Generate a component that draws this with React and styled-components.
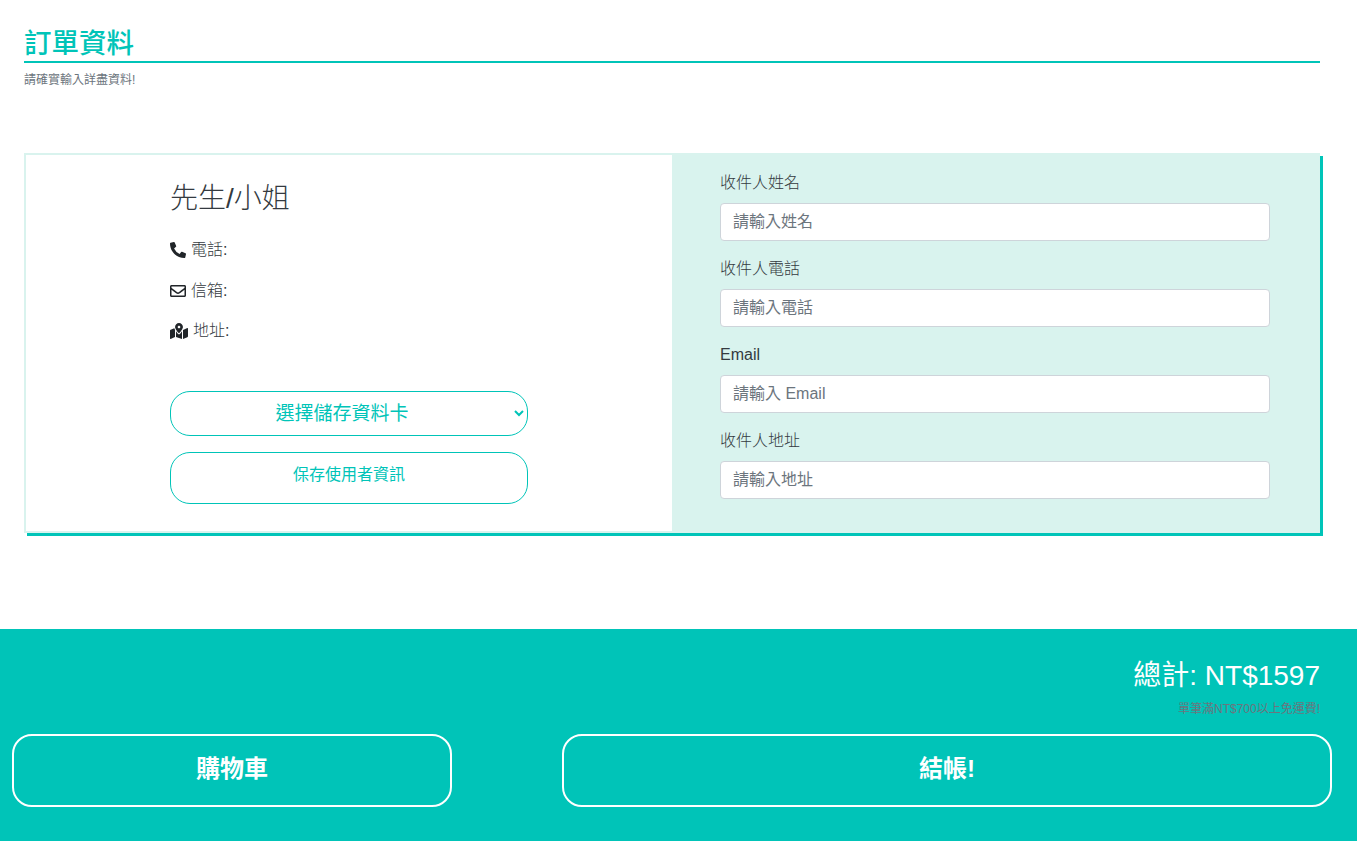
import React from 'react';
import styled, { createGlobalStyle } from 'styled-components';
import { FaPhoneAlt, FaRegEnvelope, FaMapMarkedAlt } from 'react-icons/fa';

const teal = '#00c4b8';
const mint = '#d9f3ee';
const textGrey = '#343a40';
const fontStack = '"Liberation Sans", "Noto Sans CJK TC", sans-serif';

const GlobalStyle = createGlobalStyle`
	html, body {
		margin: 0;
		padding: 0;
		background: #fff;
	}
	* {
		box-sizing: border-box;
	}
	body {
		font-family: ${fontStack};
		font-size: 16px;
		line-height: 1.5;
		color: #212529;
	}
`;

const Page = styled.div`
	min-height: 841px;
	display: flex;
	flex-direction: column;
`;

const Main = styled.main`
	height: 629px;
	padding: 24px 37px 0 24px;
`;

const Title = styled.h1`
	margin: 0;
	height: 39px;
	padding-top: 1px;
	font-size: 27.5px;
	font-weight: 500;
	line-height: 38px;
	color: ${teal};
	border-bottom: 2px solid ${teal};
`;

const Subtitle = styled.p`
	margin: 8px 0 0;
	font-size: 12px;
	line-height: 18px;
	color: #6c757d;
`;

const Card = styled.section`
	margin-top: 64px;
	height: 380px;
	display: grid;
	grid-template-columns: 1fr 1fr;
	border: 2px solid ${mint};
	box-shadow: 3px 3px 0 ${teal};
`;

const InfoColumn = styled.div`
	padding: 16px 144px 0;
	display: flex;
	flex-direction: column;
	background: #fff;
`;

const Name = styled.h3`
	margin: 8px 0 11px;
	font-size: 28px;
	font-weight: 300;
	line-height: 40px;
	color: ${textGrey};
`;

const InfoRow = styled.div`
	height: 40.5px;
	display: flex;
	align-items: center;
	gap: 5px;
	font-weight: 300;
	color: ${textGrey};

	svg {
		flex: none;
		color: #212529;
		font-size: ${(props) => props.$iconSize || 16}px;
	}
`;

const CardSelect = styled.select`
	margin-top: 39px;
	width: 100%;
	height: 45px;
	padding: 0 4px 0 2px;
	font-family: ${fontStack};
	font-size: 19px;
	color: ${teal};
	text-align: center;
	text-align-last: center;
	background: #fff;
	border: 1px solid ${teal};
	border-radius: 20px;
	outline: none;
`;

const SaveButton = styled.button`
	margin-top: 16px;
	width: 100%;
	height: 52px;
	padding: 0 0 10px;
	font-family: ${fontStack};
	font-size: 16px;
	color: ${teal};
	background: #fff;
	border: 1px solid ${teal};
	border-radius: 20px;
	cursor: pointer;
`;

const FormColumn = styled.form`
	padding: 16px 48px;
	background: ${mint};
`;

const Field = styled.div`
	margin-bottom: 16px;

	&:last-child {
		margin-bottom: 0;
	}
`;

const Label = styled.label`
	display: block;
	margin-bottom: 8px;
	line-height: 24px;
	color: ${textGrey};
	font-weight: 300;
`;

const Input = styled.input`
	display: block;
	width: 100%;
	height: 38px;
	padding: 6px 12px;
	font-family: ${fontStack};
	font-size: 16px;
	color: #212529;
	background: #fff;
	border: 1px solid #ced4da;
	border-radius: 4px;
	outline: none;

	&::placeholder {
		color: #6c757d;
		opacity: 1;
	}
`;

const Footer = styled.footer`
	height: 212px;
	padding: 27px 25px 34px 12px;
	display: flex;
	flex-direction: column;
	background: ${teal};
`;

const Total = styled.div`
	padding-right: 12px;
	text-align: right;
	font-size: 28px;
	line-height: 40px;
	color: #fff;
`;

const Note = styled.div`
	margin-top: 4px;
	padding-right: 12px;
	text-align: right;
	font-size: 12px;
	line-height: 18px;
	color: #6c757d;
`;

const Actions = styled.div`
	margin-top: auto;
	display: flex;
	justify-content: space-between;
`;

const ActionButton = styled.button`
	width: ${(props) => props.$width}px;
	height: 73px;
	padding: 0 0 8px;
	font-family: ${fontStack};
	font-size: 24px;
	font-weight: 700;
	color: #fff;
	background: transparent;
	border: 2px solid #fff;
	border-radius: 20px;
	cursor: pointer;
`;

const fields = [
	{ label: '收件人姓名', placeholder: '請輸入姓名' },
	{ label: '收件人電話', placeholder: '請輸入電話' },
	{ label: 'Email', placeholder: '請輸入 Email' },
	{ label: '收件人地址', placeholder: '請輸入地址' },
];

const App = () => {
	return (
		<Page>
			<GlobalStyle />
			<Main>
				<Title>訂單資料</Title>
				<Subtitle>請確實輸入詳盡資料!</Subtitle>
				<Card>
					<InfoColumn>
						<Name>先生/小姐</Name>
						<InfoRow>
							<FaPhoneAlt />
							<span>電話:</span>
						</InfoRow>
						<InfoRow>
							<FaRegEnvelope />
							<span>信箱:</span>
						</InfoRow>
						<InfoRow $iconSize={18}>
							<FaMapMarkedAlt />
							<span>地址:</span>
						</InfoRow>
						<CardSelect defaultValue="">
							<option value="">選擇儲存資料卡</option>
						</CardSelect>
						<SaveButton type="button">保存使用者資訊</SaveButton>
					</InfoColumn>
					<FormColumn>
						{fields.map((field) => (
							<Field key={field.label}>
								<Label>{field.label}</Label>
								<Input placeholder={field.placeholder} />
							</Field>
						))}
					</FormColumn>
				</Card>
			</Main>
			<Footer>
				<Total>總計: NT$1597</Total>
				<Note>單筆滿NT$700以上免運費!</Note>
				<Actions>
					<ActionButton type="button" $width={440}>購物車</ActionButton>
					<ActionButton type="button" $width={770}>結帳!</ActionButton>
				</Actions>
			</Footer>
		</Page>
	);
};
export default App;
